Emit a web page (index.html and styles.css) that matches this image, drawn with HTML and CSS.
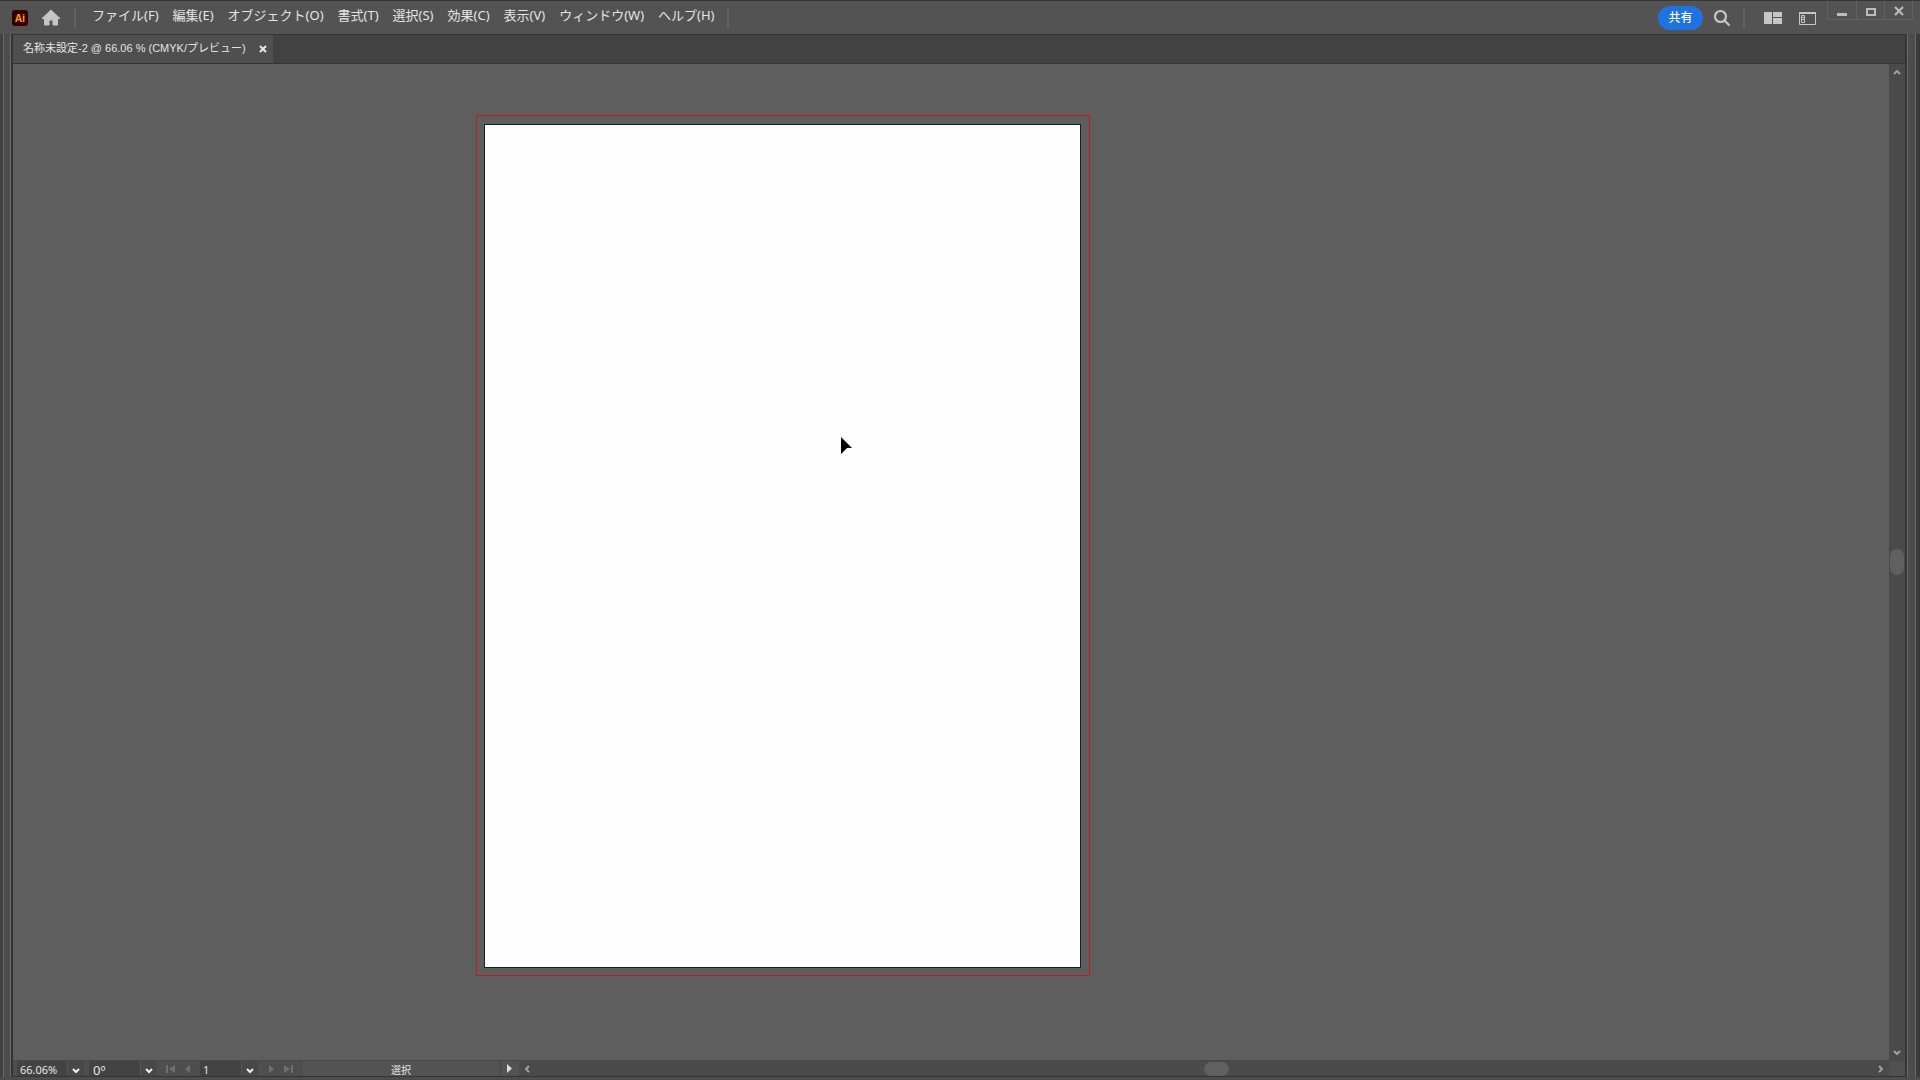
FILE: index.html
```html
<!DOCTYPE html>
<html lang="ja">
<head>
<meta charset="utf-8">
<title>名称未設定-2</title>
<link rel="stylesheet" href="styles.css">
</head>
<body>
<div class="app">
  <header class="topbar">
    <span class="logo">Ai</span>
    <button class="icon-btn home" aria-label="ホーム"><svg width="20" height="18" viewBox="0 0 20 18"><path d="M10 1 1 9.5h2.5V16H8v-5h4v5h4.500V9.500H19z" fill="#c6c6c6" stroke="#c6c6c6" stroke-linejoin="round"/></svg></button>
    <span class="divider"></span>
    <nav class="menu">
      <button>ファイル(F)</button><button>編集(E)</button><button>オブジェクト(O)</button><button>書式(T)</button><button>選択(S)</button><button>効果(C)</button><button>表示(V)</button><button>ウィンドウ(W)</button><button>ヘルプ(H)</button>
    </nav>
    <span class="divider"></span>
    <div class="tools">
      <button class="share">共有</button>
      <button class="icon-btn search" aria-label="検索"><svg width="18" height="18" viewBox="0 0 18 18" fill="none" stroke="#c6c6c6" stroke-width="2.200"><circle cx="7.500" cy="7.500" r="5.500"/><path d="m11.500 11.500 5 5"/></svg></button>
      <span class="divider"></span>
      <button class="icon-btn arrange" aria-label="ドキュメントの配置"><svg width="18" height="12" viewBox="0 0 18 12" fill="#c6c6c6"><path d="M0 0h8v12H0zM9 0h9v5H9zM9 6h9v6H9z"/></svg></button>
      <button class="icon-btn workspace" aria-label="ワークスペース"><svg width="17" height="14" viewBox="0 0 17 14"><path d="M.5 1.500h16v12H.5z" fill="none" stroke="#c6c6c6"/><path d="M0 1h17v2H0z" fill="#c6c6c6"/><path d="M2.500 4.500h3v7h-3zM3 6.500h2M3 8.500h2" fill="none" stroke="#c6c6c6"/></svg></button>
    </div>
    <div class="window">
      <button aria-label="最小化"><svg width="12" height="12"><path d="M1 8h10v3H1z" fill="#bcbcbc"/></svg></button>
      <button aria-label="最大化"><svg width="12" height="12"><path d="M2 4h8v6H2z" fill="none" stroke="#bcbcbc" stroke-width="2"/></svg></button>
      <button aria-label="閉じる"><svg width="12" height="12"><path d="m2 2 8 8M10 2 2 10" fill="none" stroke="#bcbcbc" stroke-width="2"/></svg></button>
    </div>
  </header>
  <div class="frame">
    <div class="edge left"></div>
    <main class="document">
      <div class="tabs">
        <div class="tab"><span class="tab-title">名称未設定-2 @ 66.06 % (CMYK/プレビュー)</span>
          <button class="close" aria-label="タブを閉じる"><svg width="8" height="8"><path d="m1 1 6 6M7 1 1 7" stroke="#e8e8e8" stroke-width="2"/></svg></button>
        </div>
      </div>
      <div class="workarea">
        <div class="canvas">
          <div class="bleed"><div class="artboard">
            <svg class="cursor" width="14" height="18"><path d="M1 0 12 11H7L1 17z"/></svg>
          </div></div>
        </div>
        <div class="vscroll">
          <button aria-label="上へ"><svg width="8" height="5"><path d="m1 4 3-3 3 3"/></svg></button>
          <span class="vthumb"></span>
          <button aria-label="下へ"><svg width="8" height="5"><path d="m1 1 3 3 3-3"/></svg></button>
        </div>
      </div>
      <footer class="status">
        <div class="combo zoom-combo"><input aria-label="ズーム" value="66.06%"><button aria-label="ズームを選択"><svg width="8" height="6"><path d="m1 1 3 3 3-3"/></svg></button></div>
        <div class="combo angle"><input aria-label="回転" value="0º"><button aria-label="回転を選択"><svg width="8" height="6"><path d="m1 1 3 3 3-3"/></svg></button></div>
        <div class="step">
          <button aria-label="先頭"><svg width="9" height="8"><path d="M0 0h2v8H0zM9 0v8L3 4z"/></svg></button>
          <button aria-label="前へ"><svg width="9" height="8"><path d="M7 0v8L2 4z"/></svg></button>
        </div>
        <div class="combo page"><input aria-label="アートボード" value="1"><button aria-label="アートボードを選択"><svg width="8" height="6"><path d="m1 1 3 3 3-3"/></svg></button></div>
        <div class="step">
          <button aria-label="次へ"><svg width="9" height="8"><path d="M2 0v8l5-4z"/></svg></button>
          <button aria-label="最後"><svg width="9" height="8"><path d="M0 0v8l6-4zM7 0h2v8H7z"/></svg></button>
        </div>
        <div class="tool-name">選択</div>
        <button class="play" aria-label="表示項目"><svg width="6" height="9"><path d="M0 0v9l5-4.500z"/></svg></button>
        <div class="hscroll">
          <button aria-label="左へ"><svg width="5" height="8"><path d="M4 1 1 4l3 3"/></svg></button>
          <span class="hthumb"></span>
          <button aria-label="右へ"><svg width="5" height="8"><path d="m1 1 3 3-3 3"/></svg></button>
        </div>
        <span class="corner"></span>
      </footer>
    </main>
    <div class="edge right"></div>
  </div>
</div>
</body>
</html>
```
FILE: styles.css
```css
* { box-sizing: border-box; }
body { margin: 0; background: #4c4c4c; color: #e4e4e4; font: 13px/16px "Noto Sans", "Noto Sans CJK JP", sans-serif; }
button { border: 0; padding: 0; margin: 0; background: none; color: inherit; font: inherit; display: flex; align-items: center; justify-content: center; }
svg { display: block; flex: none; }
.app { height: 100vh; display: flex; flex-direction: column; overflow: hidden; }

.topbar { height: 34px; flex: none; display: flex; align-items: center; background: #535353; border-top: 1px solid #353535; padding: 0 7px 0 12px; }
.logo { width: 16px; height: 16px; border-radius: 3px; background: #300; color: #ff9a2e; font: bold 10px/16px "Open Sans", sans-serif; text-align: center; }
.home { margin-left: 13px; }
.divider { width: 2px; height: 20px; background: #626262; margin-left: 13px; }
.menu { display: flex; gap: 14px; margin-left: 16px; padding-bottom: 5px; white-space: nowrap; }
.tools { display: flex; align-items: center; margin-left: auto; }
.share { width: 45px; height: 24px; border-radius: 12px; background: #1f73e0; color: #fff; font-size: 12px; font-weight: 500; }
.search { margin-left: 10px; }
.tools .divider { margin-left: 12px; }
.workspace { margin-left: 17px; }
.arrange { margin-left: 19px; }
.window { display: flex; align-self: flex-start; margin-left: 11px; height: 19px; border: 1px solid #626262; border-top: 0; border-radius: 0 0 3px 3px; }
.window button { width: 28px; padding-top: 2px; }
.window button + button { border-left: 1px solid #626262; }

.frame { flex: 1; min-height: 0; display: flex; padding-bottom: 3px; }
.edge { flex: none; background: #4c4c4c; }
.left { width: 13px; border-left: 3px solid #424242; border-right: 2px solid #333; box-shadow: inset 1px 0 #6b6b6b, inset -1px 0 #6b6b6b; }
.right { width: 15px; border-left: 2px solid #353535; border-right: 4px solid #3a3a3a; box-shadow: inset 1px 0 #6b6b6b, inset -1px 0 #6b6b6b; }
.document { flex: 1; min-width: 0; display: flex; flex-direction: column; border-bottom: 1px solid #353535; }
.tabs { height: 30px; flex: none; background: #424242; border: solid #353535; border-width: 1px 0; display: flex; }
.tab { width: 260px; background: #4f4f4f; display: flex; align-items: center; justify-content: space-between; padding: 0 6px 0 10px; }
.tab-title { font: 11px/16px "Liberation Sans", "Noto Sans CJK JP", sans-serif; white-space: nowrap; padding-bottom: 2px; }
.workarea { flex: 1; min-height: 0; display: flex; }
.canvas { flex: 1; position: relative; overflow: hidden; background: #5e5e5e; }
.bleed { position: absolute; left: 463px; top: 51px; width: 614px; height: 861px; padding: 8px 8px 7px 7px; border: 1px solid #c5182e; }
.artboard { position: relative; height: 100%; background: #fdfdfd; border: 1px solid #1c1c1c; }
.cursor { position: absolute; left: 355px; top: 312px; fill: #000; }
.vscroll, .hscroll { background: #4a4a4a; display: flex; align-items: center; justify-content: space-between; stroke: #a0a0a0; stroke-width: 2; fill: none; }
.vscroll { width: 16px; flex-direction: column; }
.vscroll button { width: 16px; height: 16px; }
.vthumb { width: 14px; height: 26px; border-radius: 7px; background: #606060; }

.status { height: 16px; flex: none; display: flex; background: #4e4e4e; border-top: 1px solid #484848; padding-left: 4px; }
.combo { display: flex; background: #434343; }
.combo input { min-width: 0; flex: 1; border: 0; padding: 3px 0 0 3px; background: none; color: #e4e4e4; font: 11px/16px "Noto Sans", sans-serif; }
.combo button { width: 17px; background: #484848; border-left: 1px solid #575757; padding-top: 4px; stroke: #eee; stroke-width: 2; fill: none; }
.zoom-combo { width: 67px; }
.angle { width: 68px; margin-left: 5px; }
.angle input { font-size: 13px; padding-left: 4px; }
.page { width: 58px; }
.step { display: flex; justify-content: center; gap: 8px; width: 43px; fill: #707070; }
.tool-name { width: 200px; background: #535353; border: solid #484848; border-width: 0 1px; text-align: center; font-size: 10px; line-height: 18px; }
.play { width: 18px; background: #535353; fill: #ddd; }
.hscroll { flex: 1; padding: 0 6px; }
.hthumb { width: 25px; height: 14px; border-radius: 7px; background: #606060; margin-left: 24px; }
.corner { width: 16px; background: #505050; }
```
